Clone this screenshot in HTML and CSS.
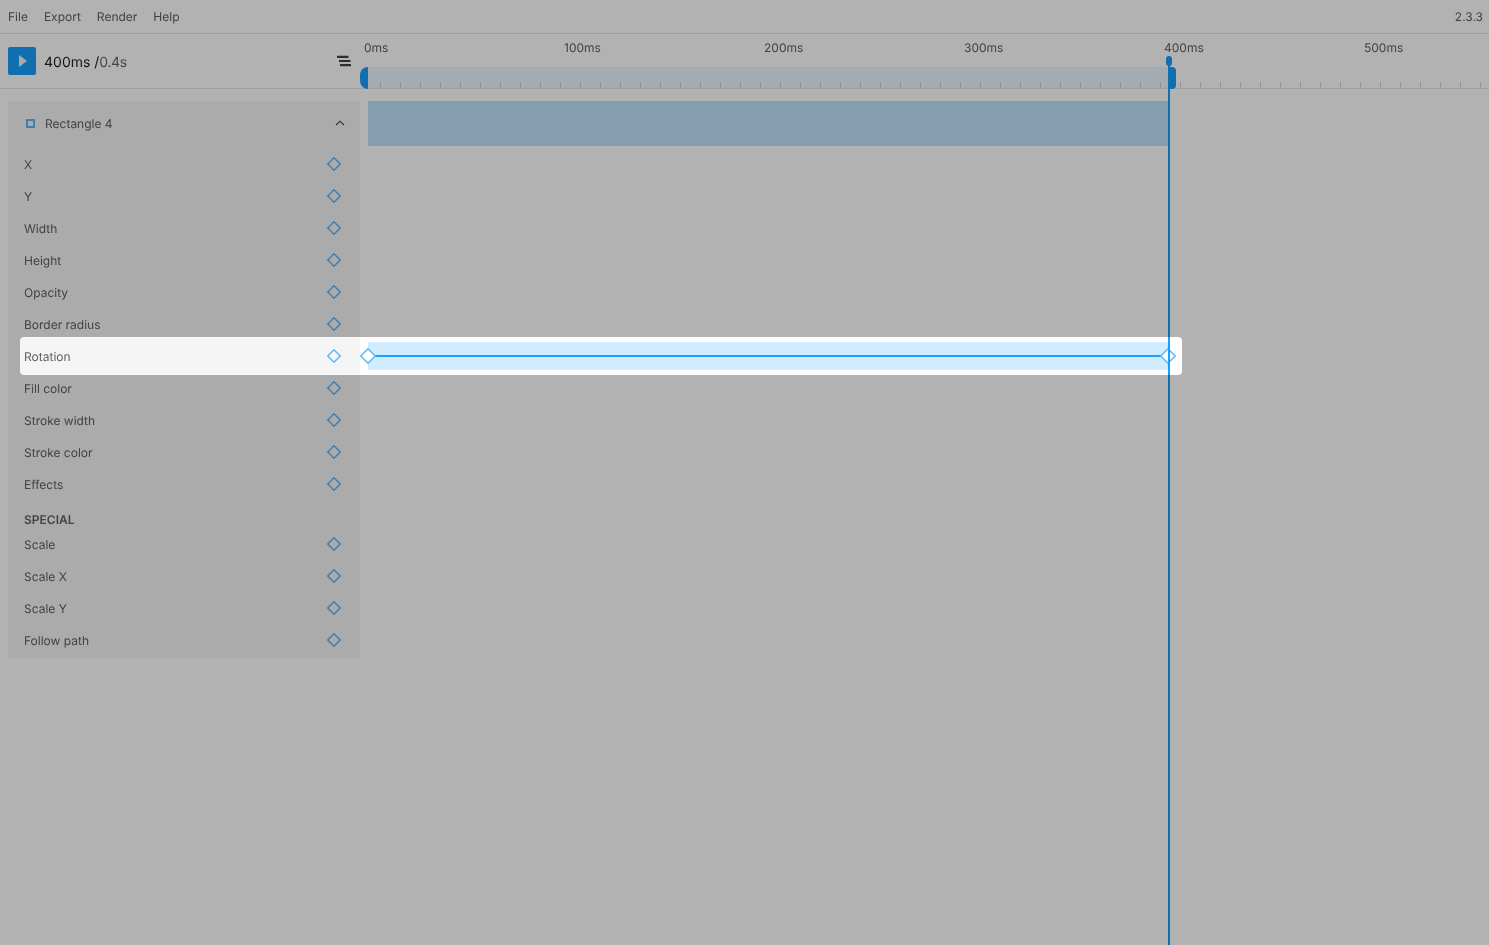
FILE: index.html
```html
<!DOCTYPE html>
<html lang="en">
<head>
    <meta charset="UTF-8">
    <title>Timeline</title>
    <link rel="stylesheet" href="styles.css">
</head>
<body>
    <svg class="defs" width="0" height="0">
        <symbol id="diamond" viewBox="0 0 18 18">
            <path d="M9 1.8 16.2 9 9 16.2 1.8 9Z" fill="#fff" stroke="#5cb8fa" stroke-width="1.5"/>
        </symbol>
        <symbol id="key" viewBox="0 0 16 16">
            <path d="M8 1.8 14.2 8 8 14.2 1.8 8Z" fill="none" stroke="#5cb8fa" stroke-width="1.5"/>
        </symbol>
    </svg>

    <header class="menubar">
        <nav class="menu">
            <a href="#">File</a>
            <a href="#">Export</a>
            <a href="#">Render</a>
            <a href="#">Help</a>
        </nav>
        <span class="version">2.3.3</span>
    </header>

    <section class="toolbar">
        <div class="transport">
            <button class="play" type="button">
                <svg width="8" height="12" viewBox="0 0 8 12"><path d="M0 0 8 6 0 12Z" fill="#f4f4f4"/></svg>
            </button>
            <div class="time">400ms /<span class="duration">0.4s</span></div>
            <svg class="sort" width="14" height="12" viewBox="0 0 14 12">
                <path d="M0 1.9h11.5M2 6h11.5M3 10.1h11" stroke="#444" stroke-width="2.2" fill="none"/>
            </svg>
        </div>
        <div class="ruler">
            <div class="ruler-labels">
                <span>0ms</span>
                <span>100ms</span>
                <span>200ms</span>
                <span>300ms</span>
                <span>400ms</span>
                <span>500ms</span>
            </div>
            <div class="ruler-track">
                <div class="work-area">
                    <span class="handle handle-start"></span>
                    <span class="handle handle-end"></span>
                </div>
            </div>
        </div>
    </section>

    <main class="main">
        <aside class="layers">
            <div class="layer-head">
                <span class="layer-icon"></span>
                <span class="layer-name">Rectangle 4</span>
                <svg class="chevron" width="10" height="6" viewBox="0 0 10 6"><path d="M1 5 5 1.2 9 5" fill="none" stroke="#444" stroke-width="1.1"/></svg>
            </div>
            <div class="prop"><span>X</span><svg class="key-icon"><use href="#key"/></svg></div>
            <div class="prop"><span>Y</span><svg class="key-icon"><use href="#key"/></svg></div>
            <div class="prop"><span>Width</span><svg class="key-icon"><use href="#key"/></svg></div>
            <div class="prop"><span>Height</span><svg class="key-icon"><use href="#key"/></svg></div>
            <div class="prop"><span>Opacity</span><svg class="key-icon"><use href="#key"/></svg></div>
            <div class="prop"><span>Border radius</span><svg class="key-icon"><use href="#key"/></svg></div>
            <div class="prop"><span>Rotation</span><svg class="key-icon"><use href="#key"/></svg></div>
            <div class="prop"><span>Fill color</span><svg class="key-icon"><use href="#key"/></svg></div>
            <div class="prop"><span>Stroke width</span><svg class="key-icon"><use href="#key"/></svg></div>
            <div class="prop"><span>Stroke color</span><svg class="key-icon"><use href="#key"/></svg></div>
            <div class="prop"><span>Effects</span><svg class="key-icon"><use href="#key"/></svg></div>
            <div class="group-title">SPECIAL</div>
            <div class="prop"><span>Scale</span><svg class="key-icon"><use href="#key"/></svg></div>
            <div class="prop"><span>Scale X</span><svg class="key-icon"><use href="#key"/></svg></div>
            <div class="prop"><span>Scale Y</span><svg class="key-icon"><use href="#key"/></svg></div>
            <div class="prop"><span>Follow path</span><svg class="key-icon"><use href="#key"/></svg></div>
        </aside>

        <div class="tracks">
            <div class="layer-bar"></div>
            <div class="lane">
                <div class="segment">
                    <svg class="keyframe keyframe-start"><use href="#diamond"/></svg>
                    <svg class="keyframe keyframe-end"><use href="#diamond"/></svg>
                </div>
            </div>
        </div>
    </main>

    <div class="playhead"><span class="playhead-knob"></span></div>
    <div class="spotlight"></div>
</body>
</html>
```

FILE: styles.css
```css
* {
    box-sizing: border-box;
}
html, body {
    height: 100%;
}
body {
    margin: 0;
    overflow: hidden;
    position: relative;
    background-color: #fff;
    color: #606060;
    font-family: Inter, "Liberation Sans", sans-serif;
    font-size: 12px;
    text-rendering: geometricPrecision;
}
.defs {
    position: absolute;
}
.menubar, .toolbar, .main {
    will-change: transform;
}
.menubar {
    height: 34px;
    display: flex;
    justify-content: space-between;
    align-items: center;
    padding: 0 6px 0 8px;
    border-bottom: 1px solid #e5e5e5;
}
.menu {
    display: flex;
    gap: 16px;
}
.menu a {
    color: inherit;
    text-decoration: none;
}
.toolbar {
    height: 55px;
    display: flex;
    border-bottom: 1px solid #e5e5e5;
}
.transport {
    width: 360px;
    flex-shrink: 0;
    display: flex;
    align-items: center;
    padding: 0 8px;
}
.play {
    width: 28px;
    height: 28px;
    padding: 0 0 0 2px;
    display: flex;
    align-items: center;
    justify-content: center;
    background-color: #18a0fb;
    border: none;
    border-radius: 2px;
}
.time {
    margin-left: 8px;
    padding-top: 2px;
    color: #222;
    font-size: 14px;
}
.duration {
    color: #666;
    letter-spacing: -0.4px;
}
.sort {
    margin-left: auto;
    margin-right: 1px;
}
.ruler {
    flex: 1;
    min-width: 0;
    display: flex;
    flex-direction: column;
    padding-left: 8px;
}
.ruler-labels {
    height: 33px;
    display: flex;
    align-items: flex-start;
    margin-left: -4px;
    padding-top: 7px;
}
.ruler-labels span {
    width: 200px;
    line-height: 14px;
}
.ruler-labels span:last-child {
    width: auto;
}
.ruler-track {
    flex: 1;
    background-image: repeating-linear-gradient(to right, transparent 0, transparent 12px, #d4d4d4 12px, #d4d4d4 13px, transparent 13px, transparent 20px);
    background-position: 0 bottom;
    background-size: 100% 6px;
    background-repeat: no-repeat;
}
.work-area {
    position: relative;
    width: 800px;
    height: 100%;
    background-color: rgba(150, 215, 255, 0.2);
}
.handle {
    position: absolute;
    top: 0;
    bottom: -1px;
    width: 8px;
    background-color: #18a0fb;
}
.handle-start {
    left: -8px;
    border-radius: 8px 0 0 8px;
}
.handle-end {
    right: -8px;
    border-radius: 0 4px 4px 0;
}
.main {
    display: flex;
    padding: 12px 0 0 8px;
}
.layers {
    width: 352px;
    flex-shrink: 0;
    padding-bottom: 2px;
    background-color: #f5f5f5;
}
.layer-head {
    height: 47px;
    display: flex;
    align-items: center;
    padding: 0 15px 2px 18px;
}
.layer-icon {
    width: 9px;
    height: 9px;
    border: 2px solid #5cb8fa;
}
.layer-name {
    margin-left: 10px;
}
.chevron {
    margin-left: auto;
    margin-bottom: 2px;
}
.prop {
    height: 32px;
    display: flex;
    justify-content: space-between;
    align-items: center;
    padding: 0 18px 0 16px;
}
.key-icon {
    width: 16px;
    height: 16px;
}
.group-title {
    height: 28px;
    padding: 13px 0 0 16px;
    font-weight: 600;
    line-height: 14px;
}
.tracks {
    flex: 1;
    min-width: 0;
    padding-left: 8px;
}
.layer-bar {
    width: 800px;
    height: 45px;
    background-color: #c0e4fc;
}
.lane {
    margin-top: 196px;
    width: 800px;
}
.segment {
    position: relative;
    height: 28px;
    background-color: #d1ecff;
}
.segment::before {
    content: "";
    position: absolute;
    left: 0;
    right: 0;
    top: 13px;
    height: 2px;
    background-color: #18a0fb;
}
.keyframe {
    position: absolute;
    top: 5px;
    width: 18px;
    height: 18px;
}
.keyframe-start {
    left: -9px;
}
.keyframe-end {
    right: -9px;
}
.playhead {
    position: absolute;
    left: 1168px;
    top: 56px;
    bottom: 0;
    width: 2px;
    background-color: #18a0fb;
}
.playhead-knob {
    position: absolute;
    left: -2px;
    top: 0;
    width: 6px;
    height: 10px;
    border-radius: 3px;
    background-color: #18a0fb;
}
.spotlight {
    position: absolute;
    left: 20px;
    top: 337px;
    width: 1162px;
    height: 38px;
    border-radius: 4px;
    box-shadow: 0 0 0 2000px rgba(0, 0, 0, 0.3);
    pointer-events: none;
}
```
